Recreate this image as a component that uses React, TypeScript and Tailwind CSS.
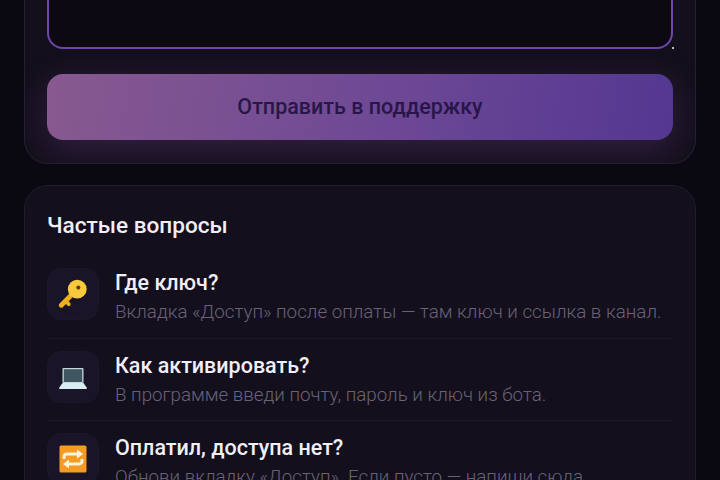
const faqs = [
  { title: 'Где ключ?', text: 'Вкладка «Доступ» после оплаты — там ключ и ссылка в канал.', icon: 'key' },
  { title: 'Как активировать?', text: 'В программе введи почту, пароль и ключ из бота.', icon: 'laptop' },
  { title: 'Оплатил, доступа нет?', text: 'Обнови вкладку «Доступ». Если пусто — напиши сюда.', icon: 'repeat' },
];

function KeyIcon() {
  return (
    <svg width="32" height="32" viewBox="0 0 30 30">
      <path d="M4 25.5 L14 15.5" stroke="#eeb01f" strokeWidth="4.6" strokeLinecap="round" />
      <path d="M8 21.5 L11 24.5" stroke="#eeb01f" strokeWidth="3.6" strokeLinecap="round" />
      <circle cx="19" cy="10.5" r="8.8" fill="#f8c93a" />
      <circle cx="20" cy="9" r="1.9" fill="#5b3d16" />
    </svg>
  );
}

function LaptopIcon() {
  return (
    <svg width="30" height="30" viewBox="0 0 30 30">
      <rect x="4.5" y="6" width="21" height="15" rx="1" fill="#c7d6dc" />
      <rect x="5.8" y="7.2" width="18.4" height="12.8" fill="#3f5560" />
      <path d="M4.5 21 H25.5 L29 26 Q29 27 28 27 H2 Q1 27 1 26 Z" fill="#d9ecf2" />
    </svg>
  );
}

function RepeatIcon() {
  return (
    <svg width="30" height="30" viewBox="0 0 30 30">
      <rect x="1.5" y="1.5" width="27" height="27" rx="1.5" fill="#f59a23" />
      <path d="M6 15 V13 Q6 10 9 10 H20" fill="none" stroke="#fff3dc" strokeWidth="2.8" />
      <path d="M19 5.5 L25 10 L19 14.5 Z" fill="#fff3dc" />
      <path d="M24 15 V17 Q24 20 21 20 H10" fill="none" stroke="#fff3dc" strokeWidth="2.8" />
      <path d="M11 15.5 L5 20 L11 24.5 Z" fill="#fff3dc" />
    </svg>
  );
}

export default function App() {
  return (
    <div className="h-[480px] overflow-hidden bg-[#0a0810] px-6 font-['Roboto',sans-serif]">
      <div className="h-[164px] overflow-hidden rounded-b-[24px] border border-t-0 border-[#251f31] bg-[#130f1c] px-[22px]">
        <div className="relative h-[49px] rounded-b-[16px] border-2 border-t-0 border-[#6f46a8] bg-[#0c0913]">
          <span className="absolute -bottom-[2px] -right-[3px] h-[2px] w-[2px] bg-[#b9b4c4]" />
        </div>
        <button className="mt-[25px] flex h-[66px] w-full items-center justify-center rounded-[16px] bg-[linear-gradient(100deg,#87598f,#6d4895_55%,#533791)] text-[21.5px] font-medium text-[#291649] shadow-[0_10px_36px_rgba(140,80,170,0.28)]">
          Отправить в поддержку
        </button>
      </div>

      <div className="mt-[21px] h-[320px] rounded-[24px] border border-[#221d2c] bg-[#130f1c] px-[22px] pt-[26px]">
        <h2 className="text-[22.6px] font-medium leading-[28px] text-[#f1eef6]">Частые вопросы</h2>
        <div className="mt-[16px]">
          {faqs.map((faq) => (
            <div key={faq.title} className="flex h-[82.5px] gap-4 border-b border-[#1e1927] pt-[12px]">
              <div className="flex h-[52px] w-[52px] shrink-0 items-center justify-center rounded-[14px] border border-[#1d1829] bg-[#191427]">
                {faq.icon === 'key' && <KeyIcon />}
                {faq.icon === 'laptop' && <LaptopIcon />}
                {faq.icon === 'repeat' && <RepeatIcon />}
              </div>
              <div>
                <div className="mt-[1px] text-[21.5px] font-medium leading-[28px] text-[#f1eef6]">{faq.title}</div>
                <div className="mt-[1px] whitespace-nowrap text-[18.8px] font-light leading-[28px] text-[#6a6279]">{faq.text}</div>
              </div>
            </div>
          ))}
        </div>
      </div>
    </div>
  );
}
